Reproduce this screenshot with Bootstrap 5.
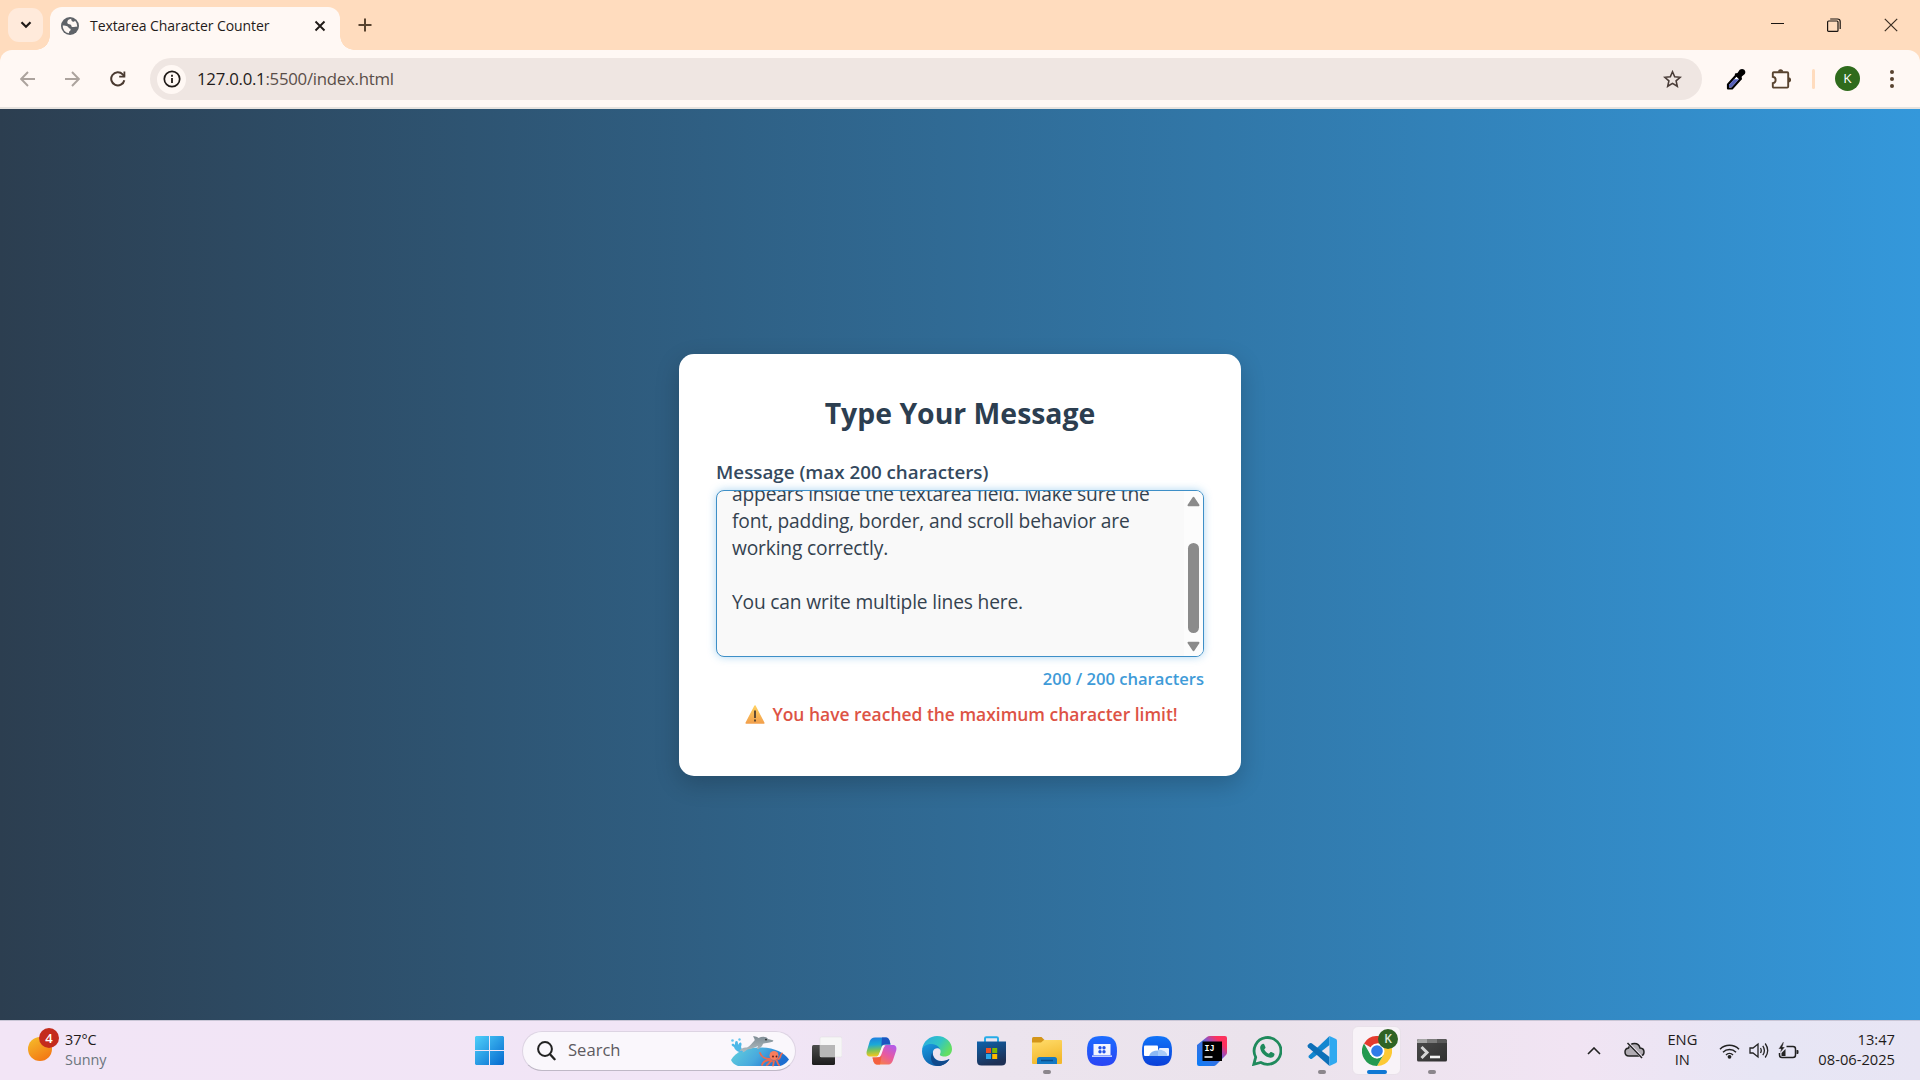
<!DOCTYPE html>
<html lang="en">
<head>
<meta charset="utf-8">
<title>Textarea Character Counter</title>
<link rel="stylesheet" href="https://cdn.jsdelivr.net/npm/bootstrap@5.3.0/dist/css/bootstrap.min.css">
<style>
body{width:1920px;height:1080px;overflow:hidden;font-family:"Open Sans","Noto Sans",sans-serif;color:#1f1b1a;line-height:1}
svg{display:block;flex:none}
.tabstrip{height:50px;background:#ffdcbe;padding-left:8px}
.tab-search{width:35px;height:34px;border-radius:11px;background:#ffeadb;margin-top:8px}
.tab-active{width:290px;height:43px;margin:7px 0 0 7px;background:#fff8f4;border-radius:12px 12px 0 0;padding:0 14px 6px 11px;position:relative;font-size:14px}
.tab-active::before,.tab-active::after{content:"";position:absolute;bottom:0;width:14px;height:14px}
.tab-active::before{left:-14px;background:radial-gradient(circle at 0 0,transparent 13.5px,#fff8f4 14px)}
.tab-active::after{right:-14px;background:radial-gradient(circle at 100% 0,transparent 13.5px,#fff8f4 14px)}
.tab-title{margin-left:11px;white-space:nowrap;letter-spacing:-.07px}
.new-tab{margin:18px 0 0 18px}
.win-ctls{margin-right:22px;gap:43px;height:49px}
.toolbar-wrap{background:#ffdcbe}
.browser-bar{height:59px;background:#fff8f4;border-bottom:2px solid #e6e2de;border-radius:12px 12px 0 0;padding:0 20px}
.ico-nav{margin-left:30px}
.omnibox{width:1552px;height:42px;border-radius:21px;background:#efe6e2;padding:0 20px 0 7px;margin-left:24px;margin-top:1px}
.info-dot{width:29px;height:29px;border-radius:50%;background:#fff8f4}
.url{font-size:16.8px;letter-spacing:-.26px;margin-left:11px;padding-top:1px;color:#5a4e49;white-space:nowrap}
.url b{font-weight:400;color:#1f1b1a}
.ico-picker{margin-left:24px}
.ico-ext{margin-left:25px}
.bar-sep{width:3px;height:20px;border-radius:2px;background:#ffdcbe;margin-left:21px}
.avatar-k{width:25px;height:25px;border-radius:50%;background:#2f6b1c;color:#fff;font-size:13.5px;margin-left:20px}
.ico-more{margin-left:25px}
.stage{height:911px;background:linear-gradient(90deg,#2c3e50,#3498db)}
.msg-card{width:562px;height:422px;background:#fff;border-radius:15px;box-shadow:0 8px 24px rgba(0,0,0,.2);padding:43px 37px 0;color:#2c3e50;margin-top:1px}
.msg-title{font-size:28.4px;font-weight:700;line-height:32px;margin:0 0 30px;text-align:center}
.msg-label{font-size:18.8px;font-weight:600;color:#34495e;line-height:26px;height:31px;white-space:nowrap}
.field{height:167px;border:1.5px solid #3e8fc7;border-radius:8px;background:#f9f9f9;box-shadow:0 0 8px rgba(52,152,219,.4);overflow:hidden;position:relative}
.field-text{font-size:19.2px;letter-spacing:-.17px;line-height:27px;padding-left:15px;margin-top:-11px;white-space:pre-line;color:#34424f}
.sbar{position:absolute;right:0;top:0;bottom:0;width:19px;background:#fcfcfc;padding:5px 1px 0 0;border-radius:0 0 0 0}
.thumb{width:11px;height:90px;border-radius:6px;background:#8b8b8b;margin-top:36px;margin-bottom:8px}
.counter{font-size:16.6px;font-weight:600;color:#3f9bd8;line-height:22px;margin-top:11px;text-align:right}
.warn{font-size:17.45px;font-weight:600;color:#dd5345;line-height:24px;margin-top:12px;padding-left:3px;gap:7px;white-space:nowrap}
.taskbar{height:60px;border-top:1px solid #c9c6d6;background:linear-gradient(90deg,#f2e5f6 0,#f1e5f6 40%,#ece4ee 52%,#ebe3ec 66%,#f1e4f3 82%,#e7e6f5 92%,#e8e5f4 100%)}
.tile{width:55px;height:59px;position:relative}
.search-pill{width:274px;height:40px;border-radius:20px;background:#faf7fc;border:1px solid #ddd4e3;border-bottom-color:#bfb8c6;padding:0 5px 0 14px;margin:0 3px 0 5px;color:#5d5a60;font-size:16.6px}
.run-dot{position:absolute;left:50%;margin-left:-4px;bottom:6px;width:8px;height:4px;border-radius:2px;background:#8b868c}
.run-active{margin-left:-10px;width:20px;background:#0f78d4}
.tile-on{position:absolute;left:3px;top:5px;width:49px;height:49px;border-radius:6px;background:#f8f3f8;border:1px solid #e9e1ea}
.tile-ico{position:relative}
.k-badge{position:absolute;left:29px;top:8px;width:20px;height:20px;border-radius:50%;background:#2f6324;color:#dfe8dc;font-size:12px;font-weight:600}
.weather{width:462px;padding-left:28px;font-size:14.4px;line-height:20px}
.weather-txt{margin:-2px 0 0 13px}
.tray{padding-right:25px}
.tray-txt{font-size:14.7px;line-height:20px;white-space:nowrap;margin-top:-3px}
.tray-cloud{margin-left:23px}
.tray-lang{width:40px;margin-left:17px}
.tray-wifi{margin-left:17px}
.tray-vol,.tray-bat{margin-left:9px}
.tray-date{margin-left:19px}
.sun-wrap{position:relative;margin-top:-3px}
.sun{width:24px;height:24px;border-radius:50%;background:linear-gradient(150deg,#f5c02c,#f36d10)}
.sun-badge{position:absolute;left:11px;top:-9px;width:20px;height:20px;border-radius:50%;background:#c42b1c;color:#fff;font-size:13px;font-weight:600}
</style>
<script src="https://cdn.jsdelivr.net/npm/bootstrap@5.3.0/dist/js/bootstrap.bundle.min.js"></script>
</head>
<body>
<header class="tabstrip d-flex">
  <div class="tab-search d-flex align-items-center justify-content-center"><svg width="12" height="8"><path d="M1.5 1.3 6 5.800l4.500-4.500" fill="none" stroke="#201a17" stroke-width="2.200"/></svg></div>
  <div class="tab-active d-flex align-items-center">
    <svg width="18" height="18" viewBox="0 0 18 18"><circle cx="9" cy="9" r="9" fill="#5f6368"/><path d="M10.2 1.7C7.800 2 6.600 3.200 6.300 5.100c-.2 1.400.6 2.100 2 2.200 1.300.1 2 .5 2 1.500 0 .9.700 1.300 1.700 1.300 1.500 0 2.600-.3 4.300-.5a7.400 7.400 0 0 0-2.300-5.800c-.5.900-1.500 1.300-2.400.8-.8-.5-1.400-1.400-1.400-2.900zM1.700 8.600c1.800.1 3.600 0 4.900.9 1 .7 1 1.900 2.200 2.100 1 .2 1 .9.700 1.700-.4.900-1.400.9-1.500 1.900 0 .5-.1.900-.1 1.100a7.300 7.300 0 0 1-6.200-7.700z" fill="#fff8f4"/></svg>
    <span class="tab-title">Textarea Character Counter</span>
    <svg class="ms-auto" width="12" height="12"><path d="M1.500 1.500l9 9M10.500 1.500l-9 9" stroke="#201a17" stroke-width="1.900"/></svg>
  </div>
  <svg class="new-tab" width="14" height="14"><path d="M7 .5v13M.5 7h13" stroke="#58432f" stroke-width="2"/></svg>
  <div class="win-ctls d-flex align-items-center ms-auto">
    <svg width="13" height="14"><path d="M0 5.500h13" stroke="#1a1512" stroke-width="1"/></svg>
    <svg width="14" height="14" fill="none" stroke="#1a1512" stroke-width="1.200"><rect x=".6" y="3" width="10.400" height="10.400" rx="1"/><path d="M3.200 1h7.300q2.700 0 2.700 2.700V11"/></svg>
    <svg width="14" height="14"><path d="M.8.8l12.400 12.400M13.200.8.8 13.200" stroke="#3a2d22" stroke-width="1.200"/></svg>
  </div>
</header>
<div class="toolbar-wrap">
<nav class="browser-bar d-flex align-items-center">
  <svg width="15" height="16"><path d="M15 8H1.500M8 1 1.200 8 8 15" fill="none" stroke="#aca39d" stroke-width="1.900"/></svg>
  <svg class="ico-nav" width="15" height="16"><path d="M0 8h13.500M7 1l6.800 7L7 15" fill="none" stroke="#aca39d" stroke-width="1.900"/></svg>
  <svg class="ico-nav" width="16" height="16"><path d="M14.300 9.200A6.600 6.600 0 1 1 12.700 3.400L14.500 5.500" fill="none" stroke="#4a3a30" stroke-width="2"/><path d="M15.300.4v6.100H9.200V4.700h4.300V.4z" fill="#4a3a30"/></svg>
  <div class="omnibox d-flex align-items-center flex-shrink-0">
    <div class="info-dot d-flex align-items-center justify-content-center"><svg width="18" height="18"><circle cx="9" cy="9" r="7.700" fill="none" stroke="#201a17" stroke-width="1.700"/><path d="M9 8v5M9 4.800v1.900" stroke="#201a17" stroke-width="1.800"/></svg></div>
    <span class="url"><b>127.0.0.1</b>:5500/index.html</span>
    <svg class="ms-auto" width="19" height="18" viewBox="0 0 19 18"><path d="M9.500 1.800l2.200 5 5.500.5-4.100 3.600 1.200 5.400-4.800-2.900-4.800 2.900 1.200-5.400-4.100-3.600 5.500-.5z" fill="none" stroke="#4a3d38" stroke-width="1.600"/></svg>
  </div>
  <svg class="ico-picker" width="20" height="22" viewBox="0 0 20 22"><path d="M2 16.500 10.500 7l4.300 3.800L6 20.500H2z" fill="#fff" stroke="#000" stroke-width="2.200" stroke-linejoin="round"/><path d="M3 17 8 11.300h5L5.500 19.300H3z" fill="#5560b8"/><path d="M9 5.500l2.500-.5 2.200-3.200Q16 .2 18.300 1.700q1.800 2 .5 4.200L15.800 8.500l-.3 3-1.700.5-5-5z" fill="#000"/></svg>
  <svg class="ico-ext" width="20" height="20" viewBox="0 0 20 20"><path d="M1.800 4.200q0-1 1-1h13.400q1 0 1 1v13.400q0 1-1 1H2.800q-1 0-1-1v-3.500c3.800-.5 3.800-5.800 0-6.300z" fill="none" stroke="#58432f" stroke-width="1.900"/><path d="M7 2.800a2.600 2.600 0 0 1 5.200 0zM17.500 8.300a2.600 2.600 0 0 1 0 5.200z" fill="#58432f"/></svg>
  <div class="bar-sep"></div>
  <div class="avatar-k d-flex align-items-center justify-content-center">K</div>
  <svg class="ico-more" width="14" height="20"><g fill="#58432f"><circle cx="7" cy="3" r="2"/><circle cx="7" cy="10" r="2"/><circle cx="7" cy="17" r="2"/></g></svg>
</nav>
</div>
<main class="stage d-flex align-items-center justify-content-center">
  <section class="msg-card">
    <h1 class="msg-title">Type Your Message</h1>
    <div class="msg-label">Message (max 200 characters)</div>
    <div class="field">
      <div class="field-text">appears inside the textarea field. Make sure the
font, padding, border, and scroll behavior are
working correctly.

You can write multiple lines here.</div>
      <div class="sbar d-flex flex-column align-items-center">
        <svg width="13" height="11"><path d="M6.500 1.800 11.500 9.200h-10z" fill="#8b8b8b" stroke="#8b8b8b" stroke-width="2" stroke-linejoin="round"/></svg>
        <div class="thumb"></div>
        <svg width="13" height="11"><path d="M6.500 9.200 11.500 1.800h-10z" fill="#8b8b8b" stroke="#8b8b8b" stroke-width="2" stroke-linejoin="round"/></svg>
      </div>
    </div>
    <div class="counter">200 / 200 characters</div>
    <div class="warn d-flex align-items-center justify-content-center">
      <svg width="20" height="19" viewBox="0 0 20 19"><defs><linearGradient id="wg" x2="0" y2="1"><stop stop-color="#ffd060"/><stop offset="1" stop-color="#f2a04c"/></linearGradient></defs><path d="M10 1 18.800 18H1.200z" fill="url(#wg)" stroke="url(#wg)" stroke-width="1.600" stroke-linejoin="round"/><path d="M10 5.500v7.500M10 14.600v2" stroke="#5a4632" stroke-width="1.900"/></svg>
      <span>You have reached the maximum character limit!</span>
    </div>
  </section>
</main>
<footer class="taskbar d-flex align-items-center">
  <div class="weather d-flex align-items-center">
    <div class="sun-wrap"><div class="sun"></div><div class="sun-badge d-flex align-items-center justify-content-center">4</div></div>
    <div class="weather-txt"><div>37°C</div><div class="text-secondary">Sunny</div></div>
  </div>
  <div class="tile d-flex align-items-center justify-content-center">
    <svg width="29" height="29"><defs><linearGradient id="win" x2="1" y2="1"><stop stop-color="#4fd0fa"/><stop offset="1" stop-color="#0569cf"/></linearGradient></defs><path d="M1 0h13v14H0V1zM15 0h13l1 1v13H15zM0 15h14v14H1l-1-1zM15 15h14v13l-1 1H15z" fill="url(#win)"/></svg>
  </div>
  <div class="search-pill d-flex align-items-center">
    <svg width="19" height="20"><circle cx="8" cy="8" r="6.900" fill="none" stroke="#222" stroke-width="2"/><path d="M13 13.200l4.600 5" stroke="#222" stroke-width="2.300" stroke-linecap="round"/></svg>
    <span class="ms-2 ps-1">Search</span>
    <svg class="ms-auto" width="60" height="32" viewBox="0 0 60 32"><defs><linearGradient id="sea" x2="1" y2=".3"><stop stop-color="#62d2dc"/><stop offset=".55" stop-color="#48a9de"/><stop offset="1" stop-color="#1d6fd0"/></linearGradient><linearGradient id="dol" x2="0" y2="1"><stop stop-color="#7f8d95"/><stop offset="1" stop-color="#b3bec3"/></linearGradient></defs>
      <path d="M1 25C6 16 18 12 32 12.500c13 .5 22 5 27 12-3 4-6 6-9 6.500H8c-3-1-6-3-7-6z" fill="url(#sea)"/>
      <path d="M13 17C8 18 5 15 4 12c-2-1-3-2-2-3 1-.8 2.500 0 3 1 0-2 0-4 1.500-4S8 8 8 10c1-2 2-3 3-2.300 1 .6.500 2.300 0 4.300z" fill="#4db8e8"/><circle cx="2.500" cy="5.500" r="1.300" fill="#63c5ef"/><circle cx="9.500" cy="4.500" r="1.200" fill="#63c5ef"/>
      <path d="M9.500 16c1.500-2.500 4-4 7.500-3.500C20 11 22 8 24.500 5.500c.5-1.500-.5-2.500-1.500-4 2-.5 4 .5 5.500 1.500 4-2 8-1.500 9.500 1l5 1.200c.6.500.3 1.300-.5 1.500C38 8 35.500 8 33 8.700c-1 3.300-4 5.500-6 5.300l1-3c-3 1.500-6 3-10 3.200-2 1-3 2.300-5.500 3.300.5-1 .5-1.500 0-2-1 0-2 .2-3 .5z" fill="url(#dol)"/><circle cx="36" cy="4.600" r=".9" fill="#222"/>
      <g fill="none" stroke="#f0694e" stroke-width="1.800" stroke-linecap="round"><path d="M40 24c-5 0-8-1-10-6M41 25c-5 0-8 1-9 5M42 26c-3 1-3 3-5 4M44 26c-1 2 0 3-1 4.500M46 25c2 1 1 4 3 5M48 24c3 0 2-5 4-5.500"/></g><circle cx="44" cy="20.500" r="4.500" fill="#fa7d5c"/><circle cx="43" cy="21.500" r=".9" fill="#5b1d18"/><circle cx="46.500" cy="21.500" r=".9" fill="#5b1d18"/>
    </svg>
  </div>
  <div class="tile d-flex align-items-center justify-content-center">
    <svg width="30" height="30"><defs><linearGradient id="tvd" x2="0" y2="1"><stop stop-color="#4c4c4c"/><stop offset="1" stop-color="#1c1c1c"/></linearGradient></defs><rect y="9" width="23" height="20" rx="1.500" fill="url(#tvd)"/><rect x="8" y="1" width="22" height="20" rx="1.500" fill="#f6f6f6" stroke="#dedede" stroke-width=".5"/><path d="M8 9h15v12H9.500L8 19.500z" fill="#b7b7b7"/></svg>
  </div>
  <div class="tile d-flex align-items-center justify-content-center">
    <svg width="31" height="28" viewBox="0 0 31 28"><defs><linearGradient id="cp1" x2=".1" y2="1"><stop stop-color="#1e7be0"/><stop offset=".4" stop-color="#1aa9d8"/><stop offset=".7" stop-color="#7cc25a"/><stop offset="1" stop-color="#f2c81e"/></linearGradient><linearGradient id="cp2" x1=".8" x2=".1" y2="1"><stop stop-color="#b45be8"/><stop offset=".45" stop-color="#e85aa0"/><stop offset="1" stop-color="#fb8a34"/></linearGradient></defs>
      <path d="M9 .5h11c2 0 3 1.500 3.500 3l1 4h-5c-2.500 0-3.500 1-4.200 4l-2 5.500c-1 2-2 2.500-4 2.500H4c-3 0-4-2.500-3.200-5.500l3-10C5 2 6 .5 9 .5z" fill="url(#cp1)"/>
      <path d="M22 27.500H11c-2 0-3-1.500-3.500-3l-1-4h3.500c3 0 4-1 5-4l2-6c1-2 2-2.500 4-2.500H27c3 0 4 2.500 3.200 5.500l-3 9C26 26 25 27.500 22 27.500z" fill="url(#cp2)"/>
      <path d="M16 .5h4c2 0 3 1.500 3.500 3l1 4h-5c-2 0-3.300.6-4.200 2z" fill="#1b55c0"/><path d="M14 27.500h-3c-2 0-3-1.500-3.500-3l-1-4h5c2 0 3.300-.6 4.200-2z" fill="#f4603f"/><path d="M16.500 8.800h3c-1.500 1-2 2-2.500 4L15.500 17c-.7 1.500-1 2.300-2.300 3h-2.500c1-.5 1.800-1 2.300-3z" fill="#fbf3f4"/></svg>
  </div>
  <div class="tile d-flex align-items-center justify-content-center">
    <svg width="30" height="30" viewBox="0 0 30 30"><defs><linearGradient id="e1" x2="1" y2=".5"><stop stop-color="#2aa8e4"/><stop offset=".6" stop-color="#32c5c4"/><stop offset="1" stop-color="#63de62"/></linearGradient><linearGradient id="e2" x2=".6" y2="1"><stop stop-color="#1b9de2"/><stop offset="1" stop-color="#0c59a4"/></linearGradient></defs>
      <path d="M0 14C1 5 8 0 15 0c9 0 15 6.500 15 13 0 5-3.500 7.500-7.500 7.500-3.500 0-5.200-1.300-4.500-2.500 1.500-2.500.5-6.500-4-7.500C8 9 2 11 0 14z" fill="url(#e1)"/>
      <path d="M0 15C.5 9.500 5.500 7.600 10 8c4.500.4 7.500 2.800 8 5.500-1.500-2-6-2-7 2-1 5 3 10 9 9.500 3 0 5-.8 7.500-2C25 27.500 20 30 15 30 6.500 30 0 23.500 0 15z" fill="url(#e2)"/>
      <path d="M10.500 16c-.5 6 4 10 9.500 9.200 3-.3 5-1.200 7.500-2.300C25 27.500 20 30 15.500 30 10 29 7 23 10.500 16z" fill="#114a8b"/></svg>
  </div>
  <div class="tile d-flex align-items-center justify-content-center">
    <svg width="29" height="30"><defs><linearGradient id="st" x2=".4" y2="1"><stop stop-color="#0e62ab"/><stop offset="1" stop-color="#1d3055"/></linearGradient></defs><path d="M8 6V2.500Q8 1.200 9.300 1.200h10.400Q21 1.200 21 2.500V6" fill="none" stroke="#27ace8" stroke-width="2"/><path d="M0 5.500h29V25q0 4.500-4.500 4.500h-20Q0 29.500 0 25z" fill="url(#st)"/><path d="M9 12h5v5H9z" fill="#f25022"/><path d="M15.200 12h5v5h-5z" fill="#7fba00"/><path d="M9 18h5v5H9z" fill="#28a8ea"/><path d="M15.200 18h5v5h-5z" fill="#ffb900"/></svg>
  </div>
  <div class="tile d-flex align-items-center justify-content-center">
    <svg width="30" height="27"><defs><linearGradient id="fo" x2=".3" y2="1"><stop stop-color="#ffdc6b"/><stop offset="1" stop-color="#f3b82c"/></linearGradient></defs><path d="M0 1.500Q0 0 1.500 0h8L13 3.500V8H0z" fill="#d3951a"/><path d="M0 5.500h9L12 3h17q1 0 1 1v22q0 1-1 1H1q-1 0-1-1z" fill="url(#fo)"/><path d="M5 27v-4.500Q5 20 7.500 20h15q2.500 0 2.500 2.500V27z" fill="#1579c4"/><path d="M9 23.500h12" stroke="#0b4f8d" stroke-width="1.500"/></svg>
    <span class="run-dot"></span>
  </div>
  <div class="tile d-flex align-items-center justify-content-center">
    <svg width="30" height="30"><defs><linearGradient id="sm" x2="0" y2="1"><stop stop-color="#1c6dff"/><stop offset="1" stop-color="#2a44f4"/></linearGradient></defs><path d="M15 0c11 0 15 4 15 15s-4 15-15 15S0 26 0 15 4 0 15 0z" fill="url(#sm)"/><path d="M6.500 8h17v11h-17zM5 19.500h20v1.200H5z" fill="#f3f6ff"/><g fill="#2454e8"><circle cx="13" cy="11.700" r="1.700"/><circle cx="17" cy="11.700" r="1.700"/><circle cx="13" cy="15.700" r="1.700"/><circle cx="17" cy="15.700" r="1.700"/></g></svg>
  </div>
  <div class="tile d-flex align-items-center justify-content-center">
    <svg width="30" height="30"><defs><linearGradient id="qs" x2="0" y2="1"><stop stop-color="#1074f8"/><stop offset="1" stop-color="#0a3fd8"/></linearGradient></defs><path d="M15 0c11 0 15 4 15 15s-4 15-15 15S0 26 0 15 4 0 15 0z" fill="url(#qs)"/><rect x="2" y="9.500" width="14" height="10.500" rx="1" fill="#fff"/><rect x="17" y="12" width="10" height="8" rx="1" fill="#e9f1ff"/><path d="M7 20a9.500 7 0 0 1 18.500 0z" fill="#8bb8f4"/><path d="M16 13.500V20h9.500A9.500 7 0 0 0 16 13.500z" fill="#a8ccf8"/></svg>
  </div>
  <div class="tile d-flex align-items-center justify-content-center">
    <svg width="30" height="30"><defs><linearGradient id="ij" x1="0" y1="1" x2="1" y2="0"><stop stop-color="#087cfa"/><stop offset=".5" stop-color="#3f6fdc"/><stop offset=".62" stop-color="#9a4dbb"/><stop offset=".8" stop-color="#fe315d"/><stop offset="1" stop-color="#f9355f"/></linearGradient></defs><path d="M0 9 10 1q1-1 3-1h15q2 0 2 2v14.500q0 1.500-1 2.500L19 29q-1 1-2 1H2q-2 0-2-2z" fill="url(#ij)"/><rect x="5.500" y="5.500" width="19.500" height="19.500" fill="#000"/><text x="7.400" y="15.200" font-family="Liberation Mono,monospace" font-weight="700" font-size="9.500" fill="#fff" textLength="10" lengthAdjust="spacingAndGlyphs">IJ</text><path d="M7.500 21h8" stroke="#fff" stroke-width="1.500"/></svg>
  </div>
  <div class="tile d-flex align-items-center justify-content-center">
    <svg width="30" height="30" viewBox="0 0 30 30"><path d="M1.800 28.300 3.700 21.200A13.400 13.400 0 1 1 8.800 26.500z" fill="none" stroke="#1f8a5c" stroke-width="2.800"/><path d="M10.500 8c.7-.3 1.500-.2 1.800.5l1.100 2.500c.2.500.1.900-.2 1.300l-1 1.300c1 1.900 2.500 3.300 4.600 4.200l1.300-1.400c.4-.4.800-.5 1.300-.3l2.500 1.200c.6.300.7.700.6 1.300-.4 2.400-2.300 3.400-4.300 3.200-4.500-.6-9.300-4.800-10-9.500-.3-1.900.8-3.700 2.300-4.300z" fill="#1f8a5c"/></svg>
  </div>
  <div class="tile d-flex align-items-center justify-content-center">
    <svg width="30" height="30" viewBox="0 0 30 30"><path d="M22.500 0 2 19.500q-1 1-.2 2l1.400 1.200q.8.600 1.800 0L22.500 9z" fill="#1387d0"/><path d="M22.500 30 1 11.200Q0 10 .8 9L2.700 7.300q1-.7 2 0L22.500 21z" fill="#0d6fb8"/><path d="M22.500 0 29 3q1 .5 1 1.700v20.600q0 1.200-1 1.700l-6.500 3z" fill="#2fa9f0"/></svg>
    <span class="run-dot"></span>
  </div>
  <div class="tile d-flex align-items-center justify-content-center">
    <span class="tile-on"></span>
    <svg class="tile-ico" width="30" height="30" viewBox="0 0 30 30"><path d="M15 15 2 7.500A15 15 0 0 1 28 7.500H15z" fill="#e33b2e"/><path d="M15 7.500h13A15 15 0 0 1 15 30l6.500-11.200z" fill="#fcc934"/><path d="M2 7.500A15 15 0 0 0 15 30l6.500-11.200-6.500 3.700-6.500-3.700z" fill="#23994f"/><circle cx="15" cy="15" r="7.500" fill="#fff"/><circle cx="15" cy="15" r="5.800" fill="#2f7ce9"/></svg>
    <span class="k-badge d-flex align-items-center justify-content-center">K</span>
    <span class="run-dot run-active"></span>
  </div>
  <div class="tile d-flex align-items-center justify-content-center">
    <svg width="30" height="23"><defs><linearGradient id="te" x2="1" y2="1"><stop stop-color="#4a4a4a"/><stop offset="1" stop-color="#303030"/></linearGradient></defs><rect width="30" height="22.500" rx="1.500" fill="url(#te)"/><path d="M1.500 0H10v4H0V1.500z" fill="#a5a5a5"/><path d="M10 0h10v4H10z" fill="#7b7b7b"/><path d="M20 0h8.500L30 1.500V4H20z" fill="#595959"/><path d="M4.500 8l5.500 5.500L4.500 19" fill="none" stroke="#d5d5d5" stroke-width="3"/><path d="M13 18h10" stroke="#f2f2f2" stroke-width="2.600"/></svg>
    <span class="run-dot"></span>
  </div>
  <div class="tray d-flex align-items-center ms-auto">
    <svg width="14" height="8"><path d="M1 7l6-6 6 6" fill="none" stroke="#222" stroke-width="1.600"/></svg>
    <svg class="tray-cloud" width="21" height="17" viewBox="0 0 21 17"><path d="M5 14q-4 0-4-4 0-3.300 3.500-4Q6 1.500 10.500 1.500 15 1.500 16 6q4 .3 4 4t-4 4z" fill="#b0abb2" stroke="#222" stroke-width="1.500"/><path d="M4.500 1.500 18 15.500" stroke="#ece4f2" stroke-width="2.600"/><path d="M3.500 1 18 16" stroke="#222" stroke-width="1.500"/></svg>
    <div class="tray-txt tray-lang text-center">ENG<br>IN</div>
    <svg class="tray-wifi" width="21" height="16" viewBox="0 0 21 16"><g fill="none" stroke="#222" stroke-width="1.500"><path d="M1 6.200a13.500 13.500 0 0 1 19 0M4 9.300a9.200 9.200 0 0 1 13 0M7 12a5 5 0 0 1 7 0"/></g><circle cx="10.500" cy="13.800" r="1.900" fill="#222"/></svg>
    <svg class="tray-vol" width="20" height="17" viewBox="0 0 20 17"><g fill="none" stroke="#222" stroke-width="1.300"><path d="M1 6h3l5-4v13l-5-4H1z"/><path d="M11.500 6q1.500 2.500 0 5M13.800 3.800q3.200 4.700 0 9.400M16.200 1.500q5 7 0 14"/></g></svg>
    <svg class="tray-bat" width="21" height="17" viewBox="0 0 21 17"><path d="M8.500 4.500h6.500q2.500 0 2.500 2.500v6q0 2.500-2.500 2.500H4q-2.500 0-2.500-2.500V11" fill="none" stroke="#222" stroke-width="1.500"/><path d="M18.500 8h1q1 0 1 1v2q0 1-1 1h-1z" fill="#222"/><path d="M3.500 14V11l4-4v7z" fill="#222"/><path d="M5 0 .5 7H3L2 11l5-6H4.500L6 0z" fill="#222" stroke="#ece4f2" stroke-width=".4"/></svg>
    <div class="tray-txt tray-date text-end">13:47<br>08-06-2025</div>
  </div>
</footer>
</body>
</html>
